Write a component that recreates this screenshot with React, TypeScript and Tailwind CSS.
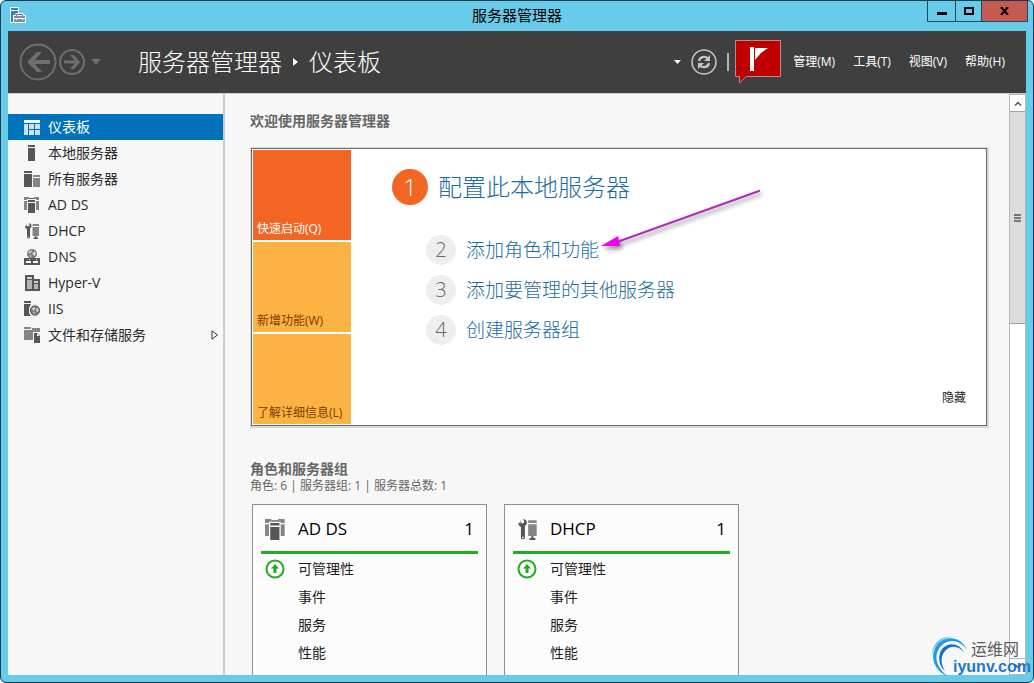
import type { ReactNode } from "react";
import clsx from "clsx";

function Svg({ size = 16, children }: { size?: number; children: ReactNode }) {
  return (
    <svg width={size} height={size} viewBox="0 0 16 16" className="shrink-0" aria-hidden="true">
      {children}
    </svg>
  );
}

function DashboardIcon() {
  return (
    <Svg>
      <path fill="#fff" d="M0 1h16v3H0z" />
      <path fill="#c9e2f4" d="M0 5h4v11H0zM5 5h5v5H5zM11 5h5v5h-5zM5 11h5v5H5zM11 11h5v5h-5z" />
    </Svg>
  );
}

function ServerIcon() {
  return (
    <Svg>
      <path fill="#565656" d="M4 0h7v2H4zM4 3h7v13H4z" />
    </Svg>
  );
}

function ServersIcon() {
  return (
    <Svg>
      <path fill="#565656" d="M0 0h8v2H0zM0 3h8v13H0z" />
      <path fill="#858585" d="M9 4h7v2H9zM9 7h7v9H9z" />
    </Svg>
  );
}

function AdIcon({ size }: { size?: number }) {
  return (
    <Svg size={size}>
      <path fill="#858585" d="M0 0h5v2H3v11H0V4h3V3H0zM10 0h5v3h-3v1h3v9h-3V2h-2z" />
      <path fill="#565656" d="M4 3h7v2H4zM4 6h7v10H4z" />
      <path fill="#565656" d="M5 1h5v1H5z" />
    </Svg>
  );
}

function DhcpIcon({ size }: { size?: number }) {
  return (
    <Svg size={size}>
      <path
        fill="#565656"
        d="M3 .3v2.400l1.200.8 1.200-.8V1.500L4.600.2C6.500 0 7.900 1.500 7.500 3.300 7.300 4.300 6.600 5 6 5.400V14a1.500 1.500 0 0 1-3 0V6C1.500 5.600.7 4 1.200 2.500l1.200 1z"
      />
      <circle cx="4.500" cy="14" r=".6" fill="#f7f7f7" />
      <path fill="#858585" d="M8.500 1H15v2H8.500zM8.500 4H15v9H8.500z" />
      <path fill="#565656" d="M11 13h1.500v1.500H14V16H9.500v-1.500H11z" />
    </Svg>
  );
}

function DnsIcon() {
  return (
    <Svg>
      <circle cx="8" cy="5" r="5" fill="#7a7a7a" />
      <path fill="#d2d2d2" d="M5 2l3-.8L7.500 3 6 4.500 4.500 5zM9 3l2-.5L12 5l-1.500 2-2-1.500zM5.500 6l2 .5L7 9z" />
      <path fill="#565656" d="M0 9h16v7H0z" />
      <path fill="#f7f7f7" d="M0 8h5v1H0zM11 8h5v1h-5zM2 12h5v2H2zM9 12h5v2H9zM5 10h1v1H5zM12 10h1v1h-1z" />
    </Svg>
  );
}

function HyperVIcon() {
  return (
    <Svg>
      <path fill="#565656" d="M1 0h9v4h6v12H1z" />
      <path fill="#d0d0d0" d="M3 2h5v2H3zM10 6h4v2h-4z" />
      <path fill="#b4b4b4" d="M3 5h5v9H3zM10 9h4v5h-4z" />
    </Svg>
  );
}

function IisIcon() {
  return (
    <Svg>
      <path fill="#565656" d="M0 0h7v2H0zM0 3h7L5 7v5l2 3H0z" />
      <circle cx="11" cy="9.500" r="4.700" fill="#7a7a7a" stroke="#565656" />
      <path fill="#dadada" d="M8 7.500l3-1.500v2L9.500 10zM12 8l2-1 .7 2.500L13 11.500zM9 11l2 .5-.5 2z" />
    </Svg>
  );
}

function FileServiceIcon() {
  return (
    <Svg>
      <path fill="#858585" d="M0 0h7v2H0zM0 3h16v2H9v8H0zM8 1h8v2H8z" />
      <path fill="#565656" d="M10 6h3.500L16 8.500V16h-6z" />
      <path fill="#e8e8e8" d="M13 6v3h3z" />
    </Svg>
  );
}

const navItems = [
  { label: "仪表板", icon: <DashboardIcon />, active: true },
  { label: "本地服务器", icon: <ServerIcon /> },
  { label: "所有服务器", icon: <ServersIcon /> },
  { label: "AD DS", icon: <AdIcon /> },
  { label: "DHCP", icon: <DhcpIcon /> },
  { label: "DNS", icon: <DnsIcon /> },
  { label: "Hyper-V", icon: <HyperVIcon /> },
  { label: "IIS", icon: <IisIcon /> },
  { label: "文件和存储服务", icon: <FileServiceIcon />, expandable: true },
];

const menus = ["管理(M)", "工具(T)", "视图(V)", "帮助(H)"];
const cardRows = ["可管理性", "事件", "服务", "性能"];

function TitleBar() {
  return (
    <div className="grid h-[30px] grid-cols-[1fr_auto_1fr] items-start">
      <svg width="16" height="16" viewBox="0 0 16 16" className="mt-1.5 ml-[9px]" aria-hidden="true">
        <path fill="#fff" d="M0 0h9v6h4l1 2h2v8H0z" />
        <path fill="#2f86bd" d="M1 1h7v2H1zM1 4h7v2H6L5 8H3v7H1z" />
        <path fill="#7b8ea3" d="M4 9h11v2H4zM4 12h11v3H4z" />
        <path fill="none" stroke="#5d7288" d="M6.500 9V7.500h6V9" />
        <path fill="#fff" d="M6 11h1v2H6zM12 11h1v2h-1z" />
      </svg>
      <h1 className="text-[15px] leading-7 text-black">服务器管理器</h1>
      <div className="mr-[5px] flex h-[21px] justify-self-end border border-t-0 border-[#24485a]">
        <button aria-label="最小化" className="flex w-[27px] items-center justify-center">
          <span className="mt-1 h-[3px] w-[10px] bg-black" />
        </button>
        <button
          aria-label="最大化"
          className="flex w-[27px] items-center justify-center border-x border-[#24485a]"
        >
          <span className="h-2 w-[10px] border-2 border-black" />
        </button>
        <button aria-label="关闭" className="flex w-[45px] items-center justify-center bg-[#c45a51]">
          <svg width="9" height="8" viewBox="0 0 9 8">
            <path d="M1 0l7 8M8 0L1 8" stroke="#000" strokeWidth="2.200" />
          </svg>
        </button>
      </div>
    </div>
  );
}

function Header() {
  return (
    <header className="flex h-[62px] shrink-0 items-center bg-[#3f3f3f] pr-[21px] pl-[11px] text-white">
      <button aria-label="后退">
        <svg width="38" height="38" viewBox="0 0 38 38" fill="none" stroke="#6f6f6f">
          <circle cx="19" cy="19" r="17.500" strokeWidth="2" />
          <path d="M31 19H10" strokeWidth="4" />
          <path fill="#6f6f6f" stroke="none" d="M18 9h5l-9 10 9 10h-5L8 19z" />
        </svg>
      </button>
      <button aria-label="前进" className="ml-0.5">
        <svg width="26" height="26" viewBox="0 0 26 26" fill="none" stroke="#6f6f6f">
          <circle cx="13" cy="13" r="12" strokeWidth="2" />
          <path d="M5 13h14" strokeWidth="3" />
          <path fill="#6f6f6f" stroke="none" d="M11 6h4l6 7-6 7h-4l6-7z" />
        </svg>
      </button>
      <button aria-label="历史记录" className="ml-1.5">
        <svg width="10" height="6" viewBox="0 0 10 6" fill="#6f6f6f">
          <path d="M0 0h10L5 6z" />
        </svg>
      </button>
      <div className="ml-[37px] flex items-center text-2xl font-light whitespace-nowrap">
        <span>服务器管理器</span>
        <svg width="5" height="8" viewBox="0 0 5 8" className="mx-[11px]" fill="#fff">
          <path d="M0 0l5 4-5 4z" />
        </svg>
        <span>仪表板</span>
      </div>
      <div className="ml-auto flex items-center">
        <button aria-label="更多">
          <svg width="7" height="4" viewBox="0 0 7 4" fill="#fff">
            <path d="M0 0h7L3.500 4z" />
          </svg>
        </button>
        <button aria-label="刷新" className="ml-2.5">
          <svg width="26" height="26" viewBox="0 0 26 26" fill="none" stroke="#c4c4c4">
            <circle cx="13" cy="13" r="12" strokeWidth="1.600" />
            <path d="M8 12c.5-4 6-5.500 9-2.500M18 14c-.5 4-6 5.500-9 2.500" strokeWidth="2.400" />
            <path fill="#c4c4c4" stroke="none" d="M19 6v6h-6zM7 20v-6h6z" />
          </svg>
        </button>
        <span className="ml-2.5 h-[18px] w-0.5 bg-[#b4b4b4]" />
        <button aria-label="通知" className="ml-1.5">
          <svg width="46" height="44" viewBox="0 0 46 44">
            <path d="M.5.500h45v36H11L4.500 43v-6.500h-4z" fill="#c00000" stroke="#b98c8c" />
            <path d="M15 7h4v24h-4z" fill="#fff" />
            <path d="M20 8h13l-7 5-6 7z" fill="#fff" />
          </svg>
        </button>
        <div className="ml-3 flex gap-[18px] text-xs whitespace-nowrap">
          {menus.map((menu) => (
            <button key={menu}>{menu}</button>
          ))}
        </div>
      </div>
    </header>
  );
}

function Sidebar() {
  return (
    <nav className="w-[217px] shrink-0 border-r-2 border-[#cdcdcd] pt-5">
      {navItems.map((item) => (
        <a
          key={item.label}
          href="#"
          className={clsx(
            "flex h-[26px] items-center gap-2 pr-1 pl-4 text-sm",
            item.active ? "bg-[#0072bc] text-white" : "text-[#2b2b2b]"
          )}
        >
          {item.icon}
          <span>{item.label}</span>
          {item.expandable && (
            <svg width="8" height="10" viewBox="0 0 8 10" className="ml-auto">
              <path d="M1 .8L6.500 5 1 9.200z" fill="#fff" stroke="#333" />
            </svg>
          )}
        </a>
      ))}
    </nav>
  );
}

function Tile({ label, primary }: { label: string; primary?: boolean }) {
  return (
    <button
      className={clsx(
        "flex h-[90px] items-end px-1 pb-px text-left text-xs leading-5 whitespace-nowrap",
        primary ? "bg-[#f26522] text-white" : "bg-[#fdb344] text-[#7d3c00]"
      )}
    >
      {label}
    </button>
  );
}

function Step({ num, label, children }: { num: number; label: string; children?: ReactNode }) {
  return (
    <li className="flex items-center gap-2.5">
      <span className="flex size-[30px] items-center justify-center rounded-full bg-[#eeeeee] text-xl font-light text-[#666]">
        {num}
      </span>
      <div className="relative">
        <a href="#" className="text-[19px] leading-[30px] font-light whitespace-nowrap text-[#1c6ca1]">
          {label}
        </a>
        {children}
      </div>
    </li>
  );
}

function PointerArrow() {
  return (
    <svg
      width="170"
      height="72"
      viewBox="0 0 170 72"
      className="pointer-events-none absolute bottom-[7px] left-full drop-shadow-[2px_3px_2px_rgba(0,0,0,0.45)]"
      aria-hidden="true"
    >
      <path d="M160 5L18 56" stroke="#b52bb8" strokeWidth="2.200" strokeLinecap="round" />
      <path d="M2 60l17-10 2 10z" fill="#f000f0" />
    </svg>
  );
}

function Welcome() {
  return (
    <section>
      <h2 className="text-sm leading-5 font-bold text-[#666]">欢迎使用服务器管理器</h2>
      <div className="mt-4 bg-[#d8dad8] pt-px pr-0.5 pb-0.5 pl-px">
        <div className="flex border border-[#6a6a6a] bg-white p-px">
          <div className="flex w-[98px] shrink-0 flex-col gap-0.5">
            <Tile label="快速启动(Q)" primary />
            <Tile label="新增功能(W)" />
            <Tile label="了解详细信息(L)" />
          </div>
          <div className="flex-1 pt-[19px] pl-[41px]">
            <div className="flex items-center gap-2.5">
              <span className="flex size-9 items-center justify-center rounded-full bg-[#f26522] text-2xl font-light text-white">
                1
              </span>
              <a href="#" className="text-2xl leading-9 font-light whitespace-nowrap text-[#1c6ca1]">
                配置此本地服务器
              </a>
            </div>
            <ol className="mt-[30px] ml-[34px] flex flex-col gap-2.5">
              <Step num={2} label="添加角色和功能">
                <PointerArrow />
              </Step>
              <Step num={3} label="添加要管理的其他服务器" />
              <Step num={4} label="创建服务器组" />
            </ol>
          </div>
          <button className="mr-[19px] mb-4 self-end text-xs leading-5 text-[#1e1e1e]">隐藏</button>
        </div>
      </div>
    </section>
  );
}

function RoleCard({ name, icon }: { name: string; icon: ReactNode }) {
  return (
    <article className="h-60 w-[235px] shrink-0 border border-[#8f8f8f] bg-[#fcfcfc] text-sm text-[#1e1e1e]">
      <div className="mx-2 flex h-[49px] items-center gap-3 border-b-[3px] border-[#22ac22] px-1 pt-0.5 text-[17px] text-black">
        <span className="w-[21px]">{icon}</span>
        <h3>{name}</h3>
        <span className="ml-auto">1</span>
      </div>
      <ul className="px-3 pt-px">
        {cardRows.map((row, i) => (
          <li key={row} className="flex h-7 items-center gap-3">
            <span className="w-[21px]">
              {i === 0 && (
                <svg width="20" height="20" viewBox="0 0 20 20">
                  <circle cx="10" cy="10" r="8.500" fill="#fff" stroke="#22ac22" strokeWidth="2" />
                  <path d="M10 5l4 4.500h-2.500V14h-3V9.500H6z" fill="#22ac22" />
                </svg>
              )}
            </span>
            <a href="#">{row}</a>
          </li>
        ))}
      </ul>
    </article>
  );
}

function Roles() {
  return (
    <section className="mt-8 text-[#666]">
      <h2 className="text-sm leading-[18px] font-bold">角色和服务器组</h2>
      <p className="text-xs leading-4">角色: 6 | 服务器组: 1 | 服务器总数: 1</p>
      <div className="mt-2.5 ml-0.5 flex gap-[17px]">
        <RoleCard name="AD DS" icon={<AdIcon size={21} />} />
        <RoleCard name="DHCP" icon={<DhcpIcon size={21} />} />
      </div>
    </section>
  );
}

function ScrollBar() {
  return (
    <div className="flex w-[17px] shrink-0 flex-col border-x border-[#b5b5b5] bg-white">
      <button aria-label="向上滚动" className="flex h-[17px] shrink-0 items-center justify-center border-t border-[#b5b5b5]">
        <svg width="8" height="5" viewBox="0 0 8 5" fill="none" stroke="#555" strokeWidth="1.500">
          <path d="M1 4.500l3-3 3 3" />
        </svg>
      </button>
      <div className="flex h-1/3 min-h-[213px] flex-col items-center justify-center gap-px border-y border-[#a0a0a0] bg-[#dcdcdc]">
        <span className="h-0.5 w-[7px] bg-[#777]" />
        <span className="h-0.5 w-[7px] bg-[#777]" />
        <span className="h-0.5 w-[7px] bg-[#777]" />
      </div>
      <button aria-label="向下滚动" className="mt-auto flex h-[17px] shrink-0 items-center justify-center border-y border-[#b5b5b5]">
        <svg width="8" height="5" viewBox="0 0 8 5" fill="none" stroke="#555" strokeWidth="1.500">
          <path d="M1 .500l3 3 3-3" />
        </svg>
      </button>
    </div>
  );
}

function Watermark() {
  return (
    <div className="pointer-events-none absolute right-1 bottom-0.5 h-[44px] w-[98px] whitespace-nowrap">
      <svg width="40" height="42" viewBox="0 0 40 42" className="absolute top-0 left-0" aria-hidden="true">
        <path d="M36 14C30 0 14-1 6 9c-8 11-3 25 10 31C4 30 3 19 9 11 16 2 29 3 36 14z" fill="#1e9ae0" />
        <path d="M33 17C28 6 17 6 11 13c-5 7-3 17 3 22-4-7-5-14 0-20 5-6 14-6 19 2z" fill="#1670c4" />
        <path d="M22 1C12 1 2 9 1 20 0 10 9-1 22 1z" fill="#5cc4f2" />
      </svg>
      <div className="ml-[22px] flex flex-col pt-1">
        <span className="pl-[18px] text-base leading-[18px] text-[#5a5a5a]">运维网</span>
        <span className="font-['Liberation_Sans',sans-serif] text-base leading-[18px] font-bold text-[#1f78cc]">
          iyunv.com
        </span>
      </div>
    </div>
  );
}

export default function App() {
  return (
    <div className="relative flex h-screen flex-col overflow-hidden rounded-md border border-[#123f4f] bg-[#69cbea] font-['Open_Sans','Noto_Sans_CJK_SC',sans-serif]">
      <TitleBar />
      <div className="mx-[7px] mb-[7px] flex min-h-0 flex-1 flex-col bg-[#f7f7f7]">
        <Header />
        <div className="flex min-h-0 flex-1 border-t border-[#cdcdcd]">
          <Sidebar />
          <main className="min-w-0 flex-1 overflow-hidden pt-[17px] pr-5 pl-[25px]">
            <Welcome />
            <Roles />
          </main>
          <ScrollBar />
        </div>
      </div>
      <Watermark />
    </div>
  );
}
